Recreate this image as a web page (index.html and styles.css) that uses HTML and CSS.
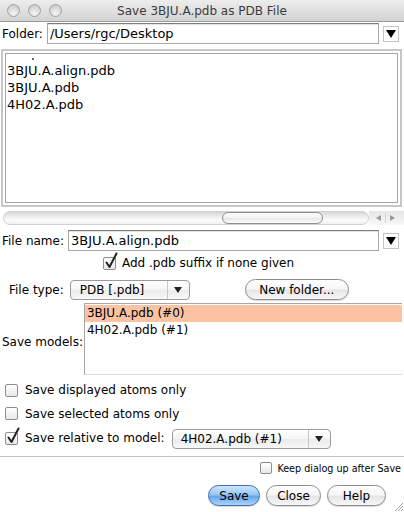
FILE: index.html
```html
<!DOCTYPE html>
<html>
<head>
<meta charset="utf-8">
<link rel="stylesheet" href="styles.css">
</head>
<body>
<div class="window">
  <div class="titlebar">
    <div class="lights"><span class="light"></span><span class="light"></span><span class="light"></span></div>
    <div class="title">Save 3BJU.A.pdb as PDB File</div>
    <div></div>
  </div>

  <div class="row folder-row">
    <span class="label">Folder:</span>
    <div class="field">/Users/rgc/Desktop</div>
    <div class="drop"><svg width="10" height="8" viewBox="0 0 10 8"><path d="M0 0H10L5 8Z" fill="#000"/></svg></div>
  </div>

  <div class="filelist">
    <div class="filelist-inner">
      <div class="fl-items">
        <div class="fl-item dot"><span class="dotmark"></span></div>
        <div class="fl-item">3BJU.A.align.pdb</div>
        <div class="fl-item">3BJU.A.pdb</div>
        <div class="fl-item">4H02.A.pdb</div>
      </div>
    </div>
  </div>

  <div class="hscroll">
    <div class="track"><div class="thumb"></div></div>
    <div class="arrows">
      <svg width="32" height="14" viewBox="0 0 32 14"><path d="M12 4L7 7L12 10Z" fill="#9a9a9a"/><line x1="16.5" y1="2" x2="16.5" y2="12" stroke="#d8d8d8"/><path d="M21 4L26 7L21 10Z" fill="#9a9a9a"/></svg>
    </div>
  </div>

  <div class="row name-row">
    <span class="label">File name:</span>
    <div class="field">3BJU.A.align.pdb</div>
    <div class="drop"><svg width="10" height="8" viewBox="0 0 10 8"><path d="M0 0H10L5 8Z" fill="#000"/></svg></div>
  </div>

  <div class="row add-row">
    <span class="cb checked"><svg class="tick" width="16" height="18" viewBox="0 0 16 18"><path d="M3.5 10.5L6.5 15L13.5 1.5" fill="none" stroke="#222" stroke-width="2" stroke-linecap="round" stroke-linejoin="round"/></svg></span>
    <span class="cb-text">Add .pdb suffix if none given</span>
  </div>

  <div class="row type-row">
    <span class="label type-label">File type:</span>
    <div class="popup type-popup"><span class="popup-text">PDB [.pdb]</span><span class="popup-arrow"><svg width="8" height="6" viewBox="0 0 8 6"><path d="M0 0H8L4 6Z" fill="#222"/></svg></span></div>
    <button class="btn newfolder">New folder...</button>
  </div>

  <div class="row models-row">
    <span class="label models-label">Save models:</span>
    <div class="models">
      <div class="m-item selected">3BJU.A.pdb (#0)</div>
      <div class="m-item">4H02.A.pdb (#1)</div>
    </div>
  </div>

  <div class="row opt-row opt1">
    <span class="cb"></span><span class="cb-text">Save displayed atoms only</span>
  </div>
  <div class="row opt-row opt2">
    <span class="cb"></span><span class="cb-text">Save selected atoms only</span>
  </div>
  <div class="row opt-row opt3">
    <span class="cb checked"><svg class="tick" width="16" height="18" viewBox="0 0 16 18"><path d="M3.5 10.5L6.5 15L13.5 1.5" fill="none" stroke="#222" stroke-width="2" stroke-linecap="round" stroke-linejoin="round"/></svg></span>
    <span class="cb-text">Save relative to model:</span>
    <div class="popup model-popup"><span class="popup-text">4H02.A.pdb (#1)</span><span class="popup-arrow"><svg width="8" height="6" viewBox="0 0 8 6"><path d="M0 0H8L4 6Z" fill="#222"/></svg></span></div>
  </div>

  <div class="separator"></div>

  <div class="row keep-row">
    <span class="cb small"></span><span class="keep-text">Keep dialog up after Save</span>
  </div>

  <div class="row buttons">
    <button class="btn default">Save</button>
    <button class="btn close">Close</button>
    <button class="btn help">Help</button>
  </div>

  <svg class="grip" width="10" height="10" viewBox="0 0 10 10"><path d="M2 10L10 2M5 10L10 5M8 10L10 8" stroke="#a0a0a0" stroke-width="1"/></svg>
</div>
</body>
</html>
```

FILE: styles.css
```css
html, body {
  margin: 0;
  padding: 0;
}
body {
  width: 404px;
  height: 512px;
  overflow: hidden;
  background: #ffffff;
  font-family: "DejaVu Sans", "Noto Sans", sans-serif;
  font-size: 12px;
  color: #000;
}
.window {
  position: relative;
  width: 404px;
  height: 512px;
  background: #fff;
}
.titlebar {
  height: 21px;
  border-bottom: 1px solid #9a9a9a;
  background: linear-gradient(#ededed, #d3d3d3);
  display: grid;
  grid-template-columns: 1fr auto 1fr;
  align-items: center;
}
.lights {
  display: flex;
  gap: 8px;
  padding-left: 7px;
}
.light {
  width: 13px;
  height: 13px;
  box-sizing: border-box;
  border-radius: 50%;
  border: 1px solid #a2a2a2;
  background: radial-gradient(circle at 50% 75%, #f6f6f6 0%, #dedede 45%, #c2c2c2 100%);
}
.title {
  font-size: 12px;
  color: #3c3c3c;
  padding-top: 1px;
}
.row {
  display: flex;
  align-items: center;
}
.label {
  font-size: 12px;
  white-space: nowrap;
}
.folder-row {
  height: 21px;
  margin-top: 1px;
  padding-left: 2px;
}
.name-row {
  height: 21px;
  margin-top: 5px;
  padding-left: 2px;
}
.field {
  flex: 1;
  height: 21px;
  box-sizing: border-box;
  margin-left: 4px;
  border: 1px solid #a8a8a8;
  border-top-color: #7c7c7c;
  padding-left: 2px;
  display: flex;
  align-items: center;
  font-size: 13px;
  box-shadow: inset 0 1px 0 #e4e4e4;
}
.drop {
  width: 16px;
  height: 16px;
  box-sizing: border-box;
  margin-left: 4px;
  margin-right: 5px;
  border: 1px solid #c4c4c4;
  background: #fff;
  display: flex;
  align-items: center;
  justify-content: center;
}
.filelist {
  margin: 5px 2px 0 1px;
  height: 158px;
  box-sizing: border-box;
  border: 2px solid #c6c6c6;
  padding: 2px;
}
.filelist-inner {
  height: 100%;
  box-sizing: border-box;
  border: 1px solid #a6a6a6;
  overflow: hidden;
}
.fl-items {
  margin-top: -9px;
  padding-left: 1px;
}
.fl-item {
  height: 17px;
  line-height: 17px;
  font-size: 13px;
}
.fl-item.dot {
  box-sizing: border-box;
  padding: 11px 0 0 25px;
  line-height: 0;
}
.dotmark {
  display: inline-block;
  width: 2px;
  height: 2px;
  border-radius: 1px;
  background: #333;
}
.hscroll {
  margin: 4px 0 0 3px;
  height: 14px;
  display: flex;
}
.track {
  width: 366px;
  height: 14px;
  box-sizing: border-box;
  border-radius: 7px;
  border: 1px solid #d0d0d0;
  background: linear-gradient(#d6d6d6, #ececec 35%, #fbfbfb 70%, #f0f0f0);
  display: flex;
  align-items: center;
}
.thumb {
  margin-left: 218px;
  width: 101px;
  height: 12px;
  box-sizing: border-box;
  border-radius: 6px;
  border: 1px solid #8f8f8f;
  background: linear-gradient(#fdfdfd, #f2f2f2 50%, #e8e8e8 51%, #fafafa);
}
.arrows {
  width: 35px;
  height: 14px;
  background: linear-gradient(#e6e6e6, #f8f8f8);
}
.add-row {
  height: 24px;
  padding-left: 103px;
}
.cb {
  position: relative;
  width: 13px;
  height: 13px;
  box-sizing: border-box;
  border: 1px solid #8e8e8e;
  border-radius: 2px;
  background: linear-gradient(#ffffff, #e8e8e8);
  flex-shrink: 0;
}
.cb .tick {
  position: absolute;
  left: -1px;
  top: -6px;
}
.cb-text {
  margin-left: 6px;
  font-size: 12px;
  white-space: nowrap;
}
.type-row {
  height: 21px;
  margin-top: 4px;
  padding-left: 9px;
}
.popup {
  height: 20px;
  box-sizing: border-box;
  border: 1px solid #9a9a9a;
  border-radius: 4px;
  background: linear-gradient(#ffffff, #f5f5f5 50%, #ebebeb 51%, #f8f8f8);
  display: flex;
  align-items: stretch;
  font-size: 12px;
}
.popup-text {
  flex: 1;
  display: flex;
  align-items: center;
  padding-left: 9px;
  border-right: 1px solid #c8c8c8;
}
.popup-arrow {
  width: 21px;
  display: flex;
  align-items: center;
  justify-content: center;
}
.type-popup {
  width: 120px;
  margin-left: 6px;
}
.btn {
  font-family: "DejaVu Sans", "Noto Sans", sans-serif;
  font-size: 12px;
  color: #000;
  height: 21px;
  box-sizing: border-box;
  padding: 0;
  border: 1px solid #8c8c8c;
  border-radius: 11px;
  background: linear-gradient(#ffffff, #f6f6f6 45%, #e6e6e6 55%, #f7f7f7);
  box-shadow: 0 1px 1px rgba(0,0,0,0.15);
}
.newfolder {
  width: 104px;
  margin-left: 55px;
}
.models-row {
  margin-top: 3px;
  padding-left: 2px;
  align-items: flex-start;
}
.models-label {
  margin-top: 32px;
}
.models {
  flex: 1;
  height: 72px;
  box-sizing: border-box;
  margin-left: 1px;
  margin-right: 2px;
  border-left: 1px solid #a6a6a6;
  border-top: 1px solid #a6a6a6;
  border-bottom: 1px solid #dcdcdc;
  padding-top: 1px;
}
.m-item {
  height: 17px;
  line-height: 17px;
  padding-left: 2px;
  font-size: 12px;
}
.m-item.selected {
  background: #fbc3a2;
}
.opt-row {
  padding-left: 5px;
}
.opt-row .cb-text {
  margin-left: 7px;
}
.opt1 {
  height: 24px;
  margin-top: 3px;
}
.opt2 {
  height: 23px;
}
.opt3 {
  height: 22px;
  margin-top: 2px;
}
.model-popup {
  width: 159px;
  margin-left: 7px;
  margin-top: 2px;
}
.model-popup .popup-text {
  padding-left: 8px;
}
.separator {
  height: 1px;
  margin-top: 7px;
  background: #c2c2c2;
}
.keep-row {
  height: 22px;
  justify-content: flex-end;
  padding-right: 3px;
}
.cb.small {
  width: 12px;
  height: 12px;
}
.keep-text {
  margin-left: 5px;
  font-size: 9.6px;
  white-space: nowrap;
}
.buttons {
  height: 21px;
  margin-top: 6px;
  justify-content: flex-end;
  gap: 6px;
  padding-right: 18px;
}
.default {
  width: 52px;
  border-color: #3d6ab0;
  background: linear-gradient(#cfe6fc, #97c6f3 45%, #6aa5e8 55%, #a8d5fb);
}
.close {
  width: 55px;
}
.help {
  width: 59px;
}
.grip {
  position: absolute;
  right: 1px;
  bottom: 1px;
}
```
